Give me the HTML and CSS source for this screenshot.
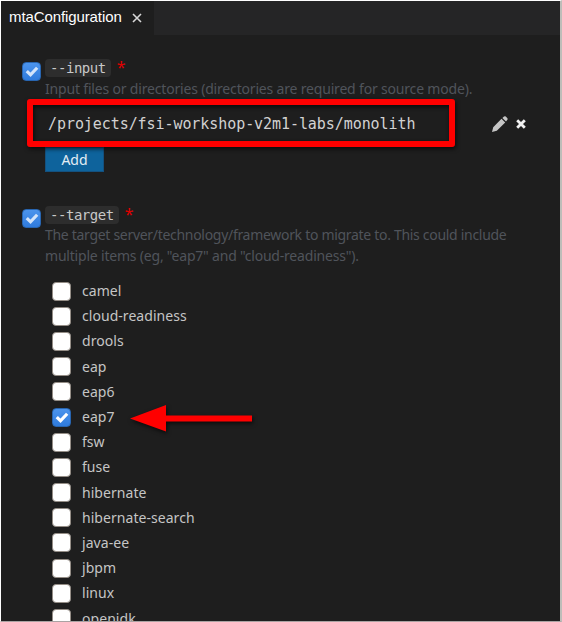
FILE: index.html
```
<!DOCTYPE html>
<html lang="en">
<head>
<meta charset="utf-8">
<title>mtaConfiguration</title>
<link rel="stylesheet" href="styles.css">
</head>
<body>
<div class="editor">
  <header class="tabs">
    <div class="tab"><span class="tab-name">mtaConfiguration</span>
      <svg class="close" viewBox="0 0 10 10"><path d="M1 1 9 9M9 1 1 9"/></svg>
    </div>
  </header>
  <main>
    <section class="option input-option">
      <span class="check on soft"><svg viewBox="0 0 18 18"><path d="M4 8.5 8 12.5 15 5"/></svg></span>
      <div class="body">
        <div class="heading"><code>--input</code><span class="star">*</span></div>
        <p class="desc desc-input">Input files or directories (directories are required for source mode).</p>
        <div class="path-row">
          <span class="path">/projects/fsi-workshop-v2m1-labs/monolith</span>
          <svg class="pencil" viewBox="0 0 16 16"><path d="M0 16 1.2 11.2 9.5 2.8 13.2 6.4 4.8 14.8ZM10.4 2 12 .6Q13 0 13.8.6L15.4 2.2Q16 3 15.4 3.8L14 5.5Z"/></svg>
          <svg class="remove" viewBox="0 0 10 10"><path d="M1.2 1.2 8.8 8.8M8.8 1.2 1.2 8.8"/></svg>
          <span class="highlight"></span>
        </div>
        <button class="add">Add</button>
      </div>
    </section>
    <section class="option target-option">
      <span class="check on soft"><svg viewBox="0 0 18 18"><path d="M4 8.5 8 12.5 15 5"/></svg></span>
      <div class="body">
        <div class="heading"><code>--target</code><span class="star">*</span></div>
        <p class="desc"><span class="line1">The target server/technology/framework to migrate to. This could include</span><br><span class="line2">multiple items (eg, "eap7" and "cloud-readiness").</span></p>
        <ul class="choices">
          <li><span class="check"></span><span class="name">camel</span></li>
          <li><span class="check"></span><span class="name">cloud-readiness</span></li>
          <li><span class="check"></span><span class="name">drools</span></li>
          <li><span class="check"></span><span class="name">eap</span></li>
          <li><span class="check"></span><span class="name">eap6</span></li>
          <li><span class="check on"><svg viewBox="0 0 18 18"><path d="M4 8.5 8 12.5 15 5"/></svg></span><span class="name">eap7</span>
            <svg class="arrow" viewBox="0 0 122 28"><path d="M0 13.5 36 0V10.5H122V16.5H36V26.5Z"/></svg></li>
          <li><span class="check"></span><span class="name">fsw</span></li>
          <li><span class="check"></span><span class="name">fuse</span></li>
          <li><span class="check"></span><span class="name">hibernate</span></li>
          <li><span class="check"></span><span class="name">hibernate-search</span></li>
          <li><span class="check"></span><span class="name">java-ee</span></li>
          <li><span class="check"></span><span class="name">jbpm</span></li>
          <li><span class="check"></span><span class="name">linux</span></li>
          <li><span class="check"></span><span class="name">openjdk</span></li>
        </ul>
      </div>
    </section>
  </main>
</div>
</body>
</html>
```
FILE: styles.css
```
* { box-sizing: border-box; }
html, body { margin: 0; height: 100%; overflow: hidden; }
body { font: 14px/20px "Noto Sans", sans-serif; color: #c5c5c5; }
svg { display: block; }
.editor {
  width: 562px; height: 622px; overflow: hidden; background: #1e1e1e;
  border: 1px solid #fff; border-right: 2px solid #bdbdb9; border-bottom-color: #aaa3a3;
}
.tabs { height: 34px; background: #252526; }
.tab {
  display: flex; align-items: center; width: 153px; height: 34px; padding: 0 0 3px 8px;
  background: #1e1e1e; color: #fff; font: 15px/20px "Liberation Sans", sans-serif;
}
.tab-name { width: 112px; white-space: nowrap; letter-spacing: -.1px; }
.close { width: 10px; height: 10px; margin: 2px 0 0 11px; fill: none; stroke: #d8d8d8; stroke-width: 1.6; }
.option { display: flex; align-items: flex-start; padding-left: 21px; }
.input-option { padding-top: 24px; height: 171px; }
.check {
  flex: none; width: 19px; height: 19px; border-radius: 4px; background: #fff;
  border: 1px solid #948d86;
}
.check.on { border-color: #2865b0; background: linear-gradient(#4c94ec, #2f7bdd); }
.check svg { width: 17px; height: 17px; fill: none; stroke: #fff; stroke-width: 3.4; }
.check.soft svg { stroke: #d3e4fa; }
.option > .check { margin-top: 3px; }
.body { width: 500px; padding-left: 4px; }
.heading { display: flex; height: 18px; }
code {
  height: 18px; padding: 0 5px; border-radius: 4px; background: #2d2d2d; color: #c8c8c8;
  font: 14px/19px "DejaVu Sans Mono", monospace; letter-spacing: -.47px;
}
.star { margin-left: 6px; color: #e00000; font-size: 16px; line-height: 16px; }
.desc { margin: 1px 0 0; height: 21px; line-height: 21px; color: #50545b; white-space: nowrap; }
.desc-input { letter-spacing: -.18px; }
.line1 { letter-spacing: -.3px; }
.line2 { letter-spacing: -.2px; }
.path-row { position: relative; display: flex; align-items: center; height: 48px; padding-left: 3px; }
.path { width: 444px; padding-top: 2px; color: #d2d2d2; font: 15px/20px "DejaVu Sans Mono", monospace; letter-spacing: -.07px; }
.pencil { width: 16px; height: 16px; fill: #c5c5c5; margin-top: 1px; }
.remove { width: 10px; height: 10px; margin: 1px 0 0 8px; fill: none; stroke: #f0f0f0; stroke-width: 2.8; }
.highlight {
  position: absolute; left: -18px; top: 0; width: 428px; height: 48px;
  border: 6px solid #f00; border-radius: 3px; box-shadow: 1px 2px 4px #000a, inset 1px 2px 4px #000a;
}
.add {
  display: block; width: 59px; height: 25px; padding: 0; border: 1px solid #14517f;
  background: #0e639c; color: #e4edf4; font: 14px/21px "Noto Sans", sans-serif;
}
.target-option .desc { height: 41px; line-height: 20.5px; }
.choices { list-style: none; margin: 13px 0 0; padding: 0 0 0 7px; }
.choices li { position: relative; display: flex; align-items: center; height: 25.2px; gap: 11px; }
.choices .check { margin-top: -1px; }
.name { margin-top: -1px; letter-spacing: .05px; }
.arrow { position: absolute; left: 78px; top: 0; width: 122px; height: 28px; fill: #f00; overflow: visible; filter: drop-shadow(1px 2px 2px #000a); }
```
